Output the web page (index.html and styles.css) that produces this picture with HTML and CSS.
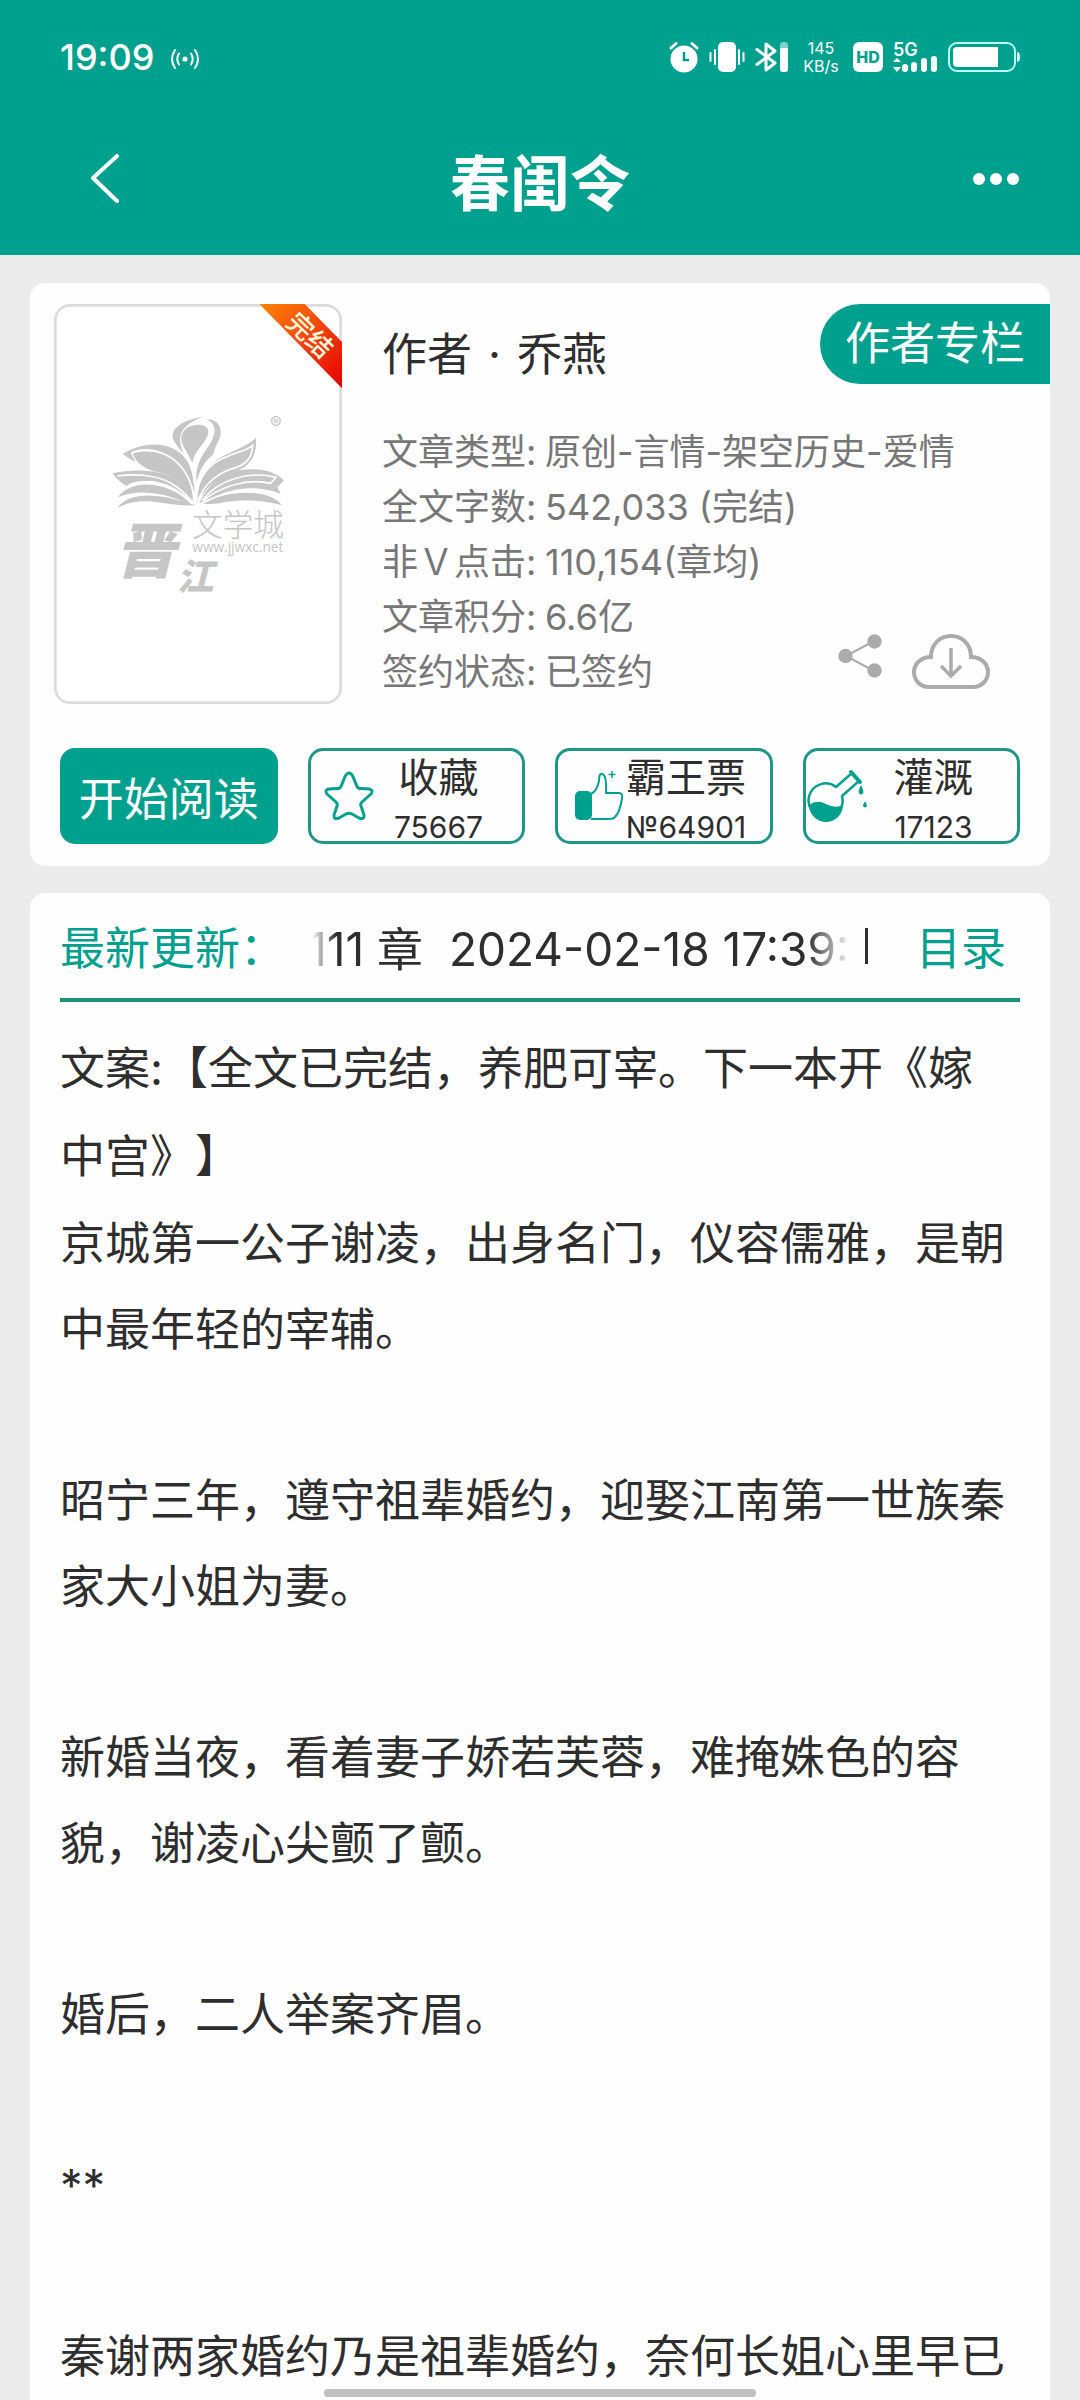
FILE: index.html
```html
<!DOCTYPE html>
<html lang="zh-CN">
<head>
    <meta charset="UTF-8">
    <meta name="viewport" content="width=device-width, initial-scale=1.0">
    <title>春闺令</title>
    <link rel="stylesheet" href="styles.css">
</head>
<body>
    <header class="header">
        <div class="status-bar">
            <span class="clock">19:09</span>
            <svg class="hotspot" width="30" height="22" viewBox="0 0 30 22" fill="none" stroke="#fff" stroke-width="2" stroke-linecap="round">
                <circle cx="15" cy="11" r="2.6" fill="#fff" stroke="none"/>
                <path d="M9 5.500Q5.500 11 9 16.500M21 5.500Q24.500 11 21 16.500M5 2Q-1 11 5 20M25 2Q31 11 25 20"/>
            </svg>
            <div class="status-icons">
                <!-- alarm -->
                <svg width="30" height="32" viewBox="0 0 30 32">
                    <circle cx="15" cy="18" r="13.500" fill="#fff"/>
                    <path d="M2 7L7 2.500M28 7L23 2.500" stroke="#fff" stroke-width="3" stroke-linecap="round"/>
                    <path d="M15 11V19H20" fill="none" stroke="#00a08f" stroke-width="2.500"/>
                </svg>
                <!-- vibrate -->
                <svg width="36" height="32" viewBox="0 0 36 32">
                    <rect x="9" y="1" width="18" height="30" rx="5" fill="#fff"/>
                    <path d="M1.500 12V20M6 9V23M30 9V23M34.500 12V20" stroke="#fff" stroke-width="2" stroke-linecap="round"/>
                </svg>
                <!-- bluetooth -->
                <svg width="34" height="32" viewBox="0 0 34 32">
                    <path d="M2 8.500L20 22L11 29V3L20 10L2 23.500" fill="none" stroke="#fff" stroke-width="3" stroke-linejoin="round" stroke-linecap="round"/>
                    <rect x="25" y="1" width="8" height="30" rx="3" fill="#fff" opacity="0.500"/>
                    <path d="M25 7H33V28Q33 31 30 31H28Q25 31 25 28Z" fill="#fff"/>
                </svg>
                <span class="net-speed">145<br>KB/s</span>
                <svg width="30" height="30" viewBox="0 0 30 30">
                    <rect width="30" height="30" rx="6" fill="#fff"/>
                    <text x="15" y="21" class="hd-text">HD</text>
                </svg>
                <!-- 5G signal -->
                <svg class="signal" width="45" height="32" viewBox="0 0 45 32">
                    <text x="0" y="15" class="signal-text">5G</text>
                    <path d="M0 21L4 17L8 21ZM0 26H8L4 31Z" fill="#fff"/>
                    <path d="M12 26V28M21 24V28M31 20V28M41 18V28" stroke="#fff" stroke-width="6" stroke-linecap="round"/>
                </svg>
                <!-- battery -->
                <svg width="72" height="30" viewBox="0 0 72 30">
                    <rect x="1" y="1" width="66" height="28" rx="8" fill="none" stroke="#b5fff5" stroke-width="2"/>
                    <path d="M9 5H50V25H9Q5 25 5 21V9Q5 5 9 5Z" fill="#fff"/>
                    <path d="M69 10Q72 10 72 15T69 20Z" fill="#c8fff8"/>
                </svg>
            </div>
        </div>
        <nav class="nav-bar">
            <button class="icon-btn" aria-label="返回">
                <svg width="30" height="50" viewBox="0 0 30 50" fill="none" stroke="#fff" stroke-width="4" stroke-linecap="round" stroke-linejoin="round">
                    <path d="M27 2L3 24L27 47"/>
                </svg>
            </button>
            <h1>春闺令</h1>
            <button class="icon-btn" aria-label="更多">
                <svg width="48" height="14" viewBox="0 0 48 14" fill="#fff">
                    <circle cx="7" cy="7" r="6"/>
                    <circle cx="24" cy="7" r="6"/>
                    <circle cx="41" cy="7" r="6"/>
                </svg>
            </button>
        </nav>
    </header>

    <main class="content">
        <section class="card book-card">
            <div class="book">
                <svg class="cover" width="288" height="400" viewBox="72 72 864 1200">
                    <defs>
                        <linearGradient id="ribbon" x1="0" y1="0" x2="1" y2="1">
                            <stop offset="0" stop-color="#ff8400"/>
                            <stop offset="0.500" stop-color="#f04410"/>
                            <stop offset="1" stop-color="#e80000"/>
                        </linearGradient>
                    </defs>
                    <rect x="76" y="76" width="856" height="1192" rx="44" fill="#fff" stroke="#dcdcdc" stroke-width="8"/>
                    <!-- open book -->
                    <g fill="#c6c6c6">
                        <path d="M518 411C455 418 418 450 430 478C438 500 458 512 466 530C440 480 440 440 518 411Z"/>
                        <path d="M487 548C470 510 448 490 455 465C464 438 500 428 524 438C548 452 528 480 510 502Q492 524 487 548Z"/>
                        <path d="M528 418C570 415 584 455 562 490C550 512 556 520 540 532C520 550 508 575 500 606C494 560 514 530 532 504C556 470 568 434 528 418Z"/>
                        <path d="M278 522C320 495 380 482 430 506C470 526 490 560 494 640C480 590 460 552 420 528C380 504 330 500 302 518L316 546C300 538 290 530 278 522Z"/>
                        <path d="M308 520C360 505 412 520 442 552C474 584 486 620 490 664C464 610 430 590 396 580C350 572 316 550 308 520Z"/>
                        <path d="M248 580C310 565 390 570 430 594C464 614 482 640 490 670C452 632 420 612 372 604C330 600 300 606 290 618C270 606 254 592 248 580Z"/>
                        <path d="M264 652C284 622 330 608 376 616C424 624 456 644 484 674C430 652 400 640 350 638C316 636 290 642 264 652Z"/>
                        <path d="M262 684C284 652 330 642 380 648C430 654 462 666 498 676C440 678 410 670 360 664C320 662 290 668 262 684Z"/>
                        <path d="M678 474C640 508 580 520 550 548C516 578 500 620 500 668C530 620 556 600 600 580C650 566 682 540 678 474Z"/>
                        <path d="M508 670C530 620 570 580 630 570C690 562 740 575 762 602L742 620L752 642C700 620 640 620 590 636C560 646 530 660 508 670Z"/>
                        <path d="M520 672C570 640 640 632 690 642C724 648 744 660 756 676C710 664 680 660 620 662C580 666 550 674 520 672Z"/>
                    </g>
                    <g fill="none" stroke="#fff" stroke-width="5">
                        <path d="M500 660C500 590 540 548 590 530C626 514 650 512 668 496C666 530 650 552 620 562C570 574 520 610 504 664"/>
                        <path d="M262 588C330 578 400 590 436 618Q468 640 488 668"/>
                        <path d="M516 662C560 604 650 570 738 592L722 610C650 594 570 620 520 662"/>
                        <path d="M524 430C560 446 550 476 528 502Q502 530 494 580"/>
                    </g>
                    <text x="720" y="447" class="logo-mark">®</text>
                    <text x="486" y="768" class="logo-name">文学城</text>
                    <text x="487" y="815" class="logo-url">www.jjwxc.net</text>
                    <text x="256" y="880" class="logo-jin">晋</text>
                    <text x="440" y="930" class="logo-jiang">江</text>
                    <path d="M688 72H824L936 186V325Z" fill="url(#ribbon)"/>
                    <text transform="translate(838 168) rotate(44)" y="25" class="ribbon-text">完结</text>
                </svg>
                <div class="book-info">
                    <div class="book-head">
                        <p class="author"><span>作者</span><span>·</span><span>乔燕</span></p>
                        <a href="#" class="author-link">作者专栏</a>
                    </div>
                    <dl class="stats">
                        <div><dt>文章类型:</dt><dd>原创-言情-架空历史-爱情</dd></div>
                        <div><dt>全文字数:</dt><dd>542,033 (完结)</dd></div>
                        <div><dt>非Ｖ点击:</dt><dd>110,154(章均)</dd></div>
                        <div><dt>文章积分:</dt><dd>6.6亿</dd></div>
                        <div><dt>签约状态:</dt><dd>已签约</dd></div>
                    </dl>
                    <div class="tools">
                        <button class="icon-btn" aria-label="分享">
                            <svg width="44" height="44" viewBox="0 0 44 44" fill="#ababab">
                                <path d="M36 7L8 22L36 37" fill="none" stroke="#ababab" stroke-width="2"/>
                                <circle cx="36.500" cy="7.500" r="7.200"/>
                                <circle cx="7.500" cy="22" r="7.200"/>
                                <circle cx="36.500" cy="36.500" r="7.200"/>
                            </svg>
                        </button>
                        <button class="icon-btn" aria-label="下载">
                            <svg width="78" height="56" viewBox="0 0 78 56" fill="none" stroke="#ababab" stroke-width="4">
                                <path d="M17 53C8 53 2 46 2 38C2 30 9 23 19 23C19 10 28 2 39 2C50 2 59 10 59 23C69 23 76 30 76 38C76 46 70 53 61 53Z"/>
                                <path d="M39 14V41M29 32L39 42L49 32" stroke-width="3.500"/>
                            </svg>
                        </button>
                    </div>
                </div>
            </div>
            <div class="actions">
                <button class="action read-btn">开始阅读</button>
                <button class="action">
                    <svg width="66" height="54" viewBox="2 0 66 54" fill="none" stroke="#00a08f" stroke-width="3" stroke-linejoin="round">
                        <path d="M36.500 6.500Q40 1.500 43.500 6.500L48 17.500Q49 19.500 52 19.500L60 20Q65 21 62 25L53 33Q51 35 52 37L55 46Q55.500 51 50 49L43 45Q40 43.500 37 45L30 49Q24.500 51 25 46L28 37Q29 35 27 33L18 25Q15 21 20 20L28 19.500Q31 19.500 32 17.500Z"/>
                    </svg>
                    <span class="action-text">收藏<small>75667</small></span>
                </button>
                <button class="action">
                    <svg width="66" height="54" viewBox="2 0 66 54" fill="none" stroke="#00a08f" stroke-width="2" stroke-linejoin="round">
                        <rect x="19" y="22" width="17" height="29" rx="5" fill="#00a08f" stroke="none"/>
                        <path d="M35 25Q41 22 43 12Q43 4 46 5Q51 6 50 24H63Q67 24 66 29Q64 44 58 49Q56 50 52 50H35"/>
                        <path d="M56 2V9M52.500 5.500H59.500" stroke-width="1.500"/>
                    </svg>
                    <span class="action-text">霸王票<small>№64901</small></span>
                </button>
                <button class="action">
                    <svg width="66" height="54" viewBox="1 0 66 54" fill="none" stroke="#00a08f" stroke-width="2.500" stroke-linejoin="round">
                        <path d="M31 18L47 4L54 12L37 27A17 17 0 1 1 31 18Z"/>
                        <path d="M46 3L55 13" stroke-width="4" stroke-linecap="round"/>
                        <path d="M4 36Q12 30 21 35T38 36A17 17 0 0 1 4 36Z" fill="#00a08f" stroke="none"/>
                        <path d="M56 17Q60 25 56 25T56 17ZM60 33Q63 38 60 38T60 33Z" fill="#00a08f" stroke-width="1"/>
                    </svg>
                    <span class="action-text">灌溉<small>17123</small></span>
                </button>
            </div>
        </section>

        <section class="card intro-card">
            <div class="update-row">
                <span class="update-label">最新更新：</span>
                <div class="marquee">111 章&nbsp; 2024-02-18 17:39:</div>
                <span class="divider"></span>
                <a href="#" class="catalog-link">目录</a>
            </div>
            <div class="intro">
                <p class="intro-lead">文案:【全文已完结，养肥可宰。下一本开《嫁中宫》】</p>
                <p>京城第一公子谢凌，出身名门，仪容儒雅，是朝中最年轻的宰辅。</p>
                <p>昭宁三年，遵守祖辈婚约，迎娶江南第一世族秦家大小姐为妻。</p>
                <p>新婚当夜，看着妻子娇若芙蓉，难掩姝色的容貌，谢凌心尖颤了颤。</p>
                <p>婚后，二人举案齐眉。</p>
                <p>**</p>
                <p>秦谢两家婚约乃是祖辈婚约，奈何长姐心里早已</p>
            </div>
        </section>
    </main>

    <div class="home-indicator"></div>
</body>
</html>
```
FILE: styles.css
```css
* {
    margin: 0;
    padding: 0;
    box-sizing: border-box;
}

body {
    display: flex;
    flex-direction: column;
    height: 100vh;
    overflow: hidden;
    background-color: #ebebeb;
    color: #2e2e2e;
    font-family: Inter, "Noto Sans CJK SC", sans-serif;
    font-size: 45px;
    text-spacing-trim: space-all;
}

button {
    border: none;
    background: none;
    color: inherit;
    font: inherit;
    cursor: pointer;
}

a {
    color: #00a08f;
    text-decoration: none;
}

svg {
    display: block;
    flex-shrink: 0;
}

/* header */
.header {
    flex-shrink: 0;
    height: 255px;
    background-color: #00a08f;
    color: #ffffff;
}

.status-bar {
    display: flex;
    align-items: center;
    height: 114px;
    padding: 0 60px;
}

.clock {
    font-size: 36px;
    font-weight: 500;
}

.hotspot {
    margin: 4px 0 0 16px;
}

.status-icons {
    display: flex;
    align-items: center;
    gap: 10px;
    margin-left: auto;
}

.net-speed {
    width: 36px;
    margin: 0 4px;
    font-size: 16px;
    line-height: 18px;
    text-align: center;
}

.hd-text {
    fill: #00a08f;
    font-size: 16px;
    font-weight: 800;
    text-anchor: middle;
}

.signal {
    overflow: visible;
}

.signal-text {
    fill: #ffffff;
    font-size: 18px;
    font-weight: 600;
}

.nav-bar {
    display: flex;
    align-items: center;
    justify-content: space-between;
    height: 130px;
    padding: 0 60px 0 90px;
}

.nav-bar h1 {
    flex: 1;
    padding-right: 12px;
    font-size: 60px;
    font-weight: 700;
    text-align: center;
}

/* cards */
.content {
    display: flex;
    flex-direction: column;
    flex: 1;
    gap: 27px;
    min-height: 0;
    padding: 28px 30px 0;
    overflow: hidden;
}

.card {
    flex-shrink: 0;
    background-color: #fefefe;
    border-radius: 15px;
}

.book-card {
    padding: 21px 0 22px;
}

.book {
    display: flex;
    gap: 40px;
    padding-left: 24px;
}

.logo-mark {
    fill: #c6c6c6;
    font-size: 52px;
}

.logo-name {
    fill: #c6c6c6;
    font-size: 92px;
    font-weight: 300;
}

.logo-url {
    fill: #c6c6c6;
    font-family: "Open Sans", sans-serif;
    font-size: 41px;
}

.logo-jin {
    fill: #c6c6c6;
    font-size: 180px;
    font-style: italic;
    font-weight: 900;
}

.logo-jiang {
    fill: #c6c6c6;
    font-size: 110px;
    font-style: italic;
    font-weight: 900;
}

.ribbon-text {
    fill: #fff6d8;
    font-size: 78px;
    font-weight: 500;
    text-anchor: middle;
}

.book-info {
    position: relative;
    flex: 1;
}

.book-head {
    display: flex;
    justify-content: space-between;
    height: 80px;
    margin-bottom: 41px;
}

.author {
    display: flex;
    gap: 16px;
    padding-top: 24px;
    line-height: 54px;
}

.author-link {
    height: 80px;
    padding: 0 25px;
    border-radius: 40px 0 0 40px;
    background-color: #00a08f;
    color: #ffffff;
    line-height: 80px;
}

.stats {
    color: #777777;
    font-size: 36px;
    line-height: 55px;
}

.stats div {
    display: flex;
}

.stats dt {
    width: 163px;
}

.tools {
    display: flex;
    align-items: flex-start;
    gap: 30px;
    position: absolute;
    right: 60px;
    bottom: 14px;
}

.actions {
    display: grid;
    grid-template-columns: repeat(4, 1fr);
    gap: 30px;
    padding: 44px 30px 0;
}

.action {
    display: flex;
    align-items: center;
    height: 96px;
    border: 3px solid #1f9686;
    border-radius: 15px;
}

.action-text {
    align-self: flex-start;
    width: 124px;
    font-size: 40px;
    line-height: 54px;
    text-align: center;
    white-space: nowrap;
}

.action-text small {
    display: block;
    font-size: 30px;
    line-height: 44px;
}

.read-btn {
    justify-content: center;
    border-color: #00a08f;
    background-color: #00a08f;
    color: #ffffff;
}

/* intro */
.intro-card {
    padding: 0 30px;
}

.update-row {
    display: flex;
    align-items: center;
    height: 109px;
    border-bottom: 4px solid #1f9080;
    color: #2e2e2e;
}

.update-label {
    width: 244px;
    color: #00a08f;
}

.marquee {
    flex: 1;
    overflow: hidden;
    padding-left: 4px;
    font-size: 46px;
    white-space: nowrap;
    mask-image: linear-gradient(to right, transparent 8px, #000 32px, #000 calc(100% - 44px), transparent);
}

.divider {
    width: 3px;
    height: 36px;
    margin: 0 48px 0 14px;
    background-color: #2e2e2e;
}

.catalog-link {
    margin-right: 14px;
}

.intro {
    padding: 23px 10px 0 0;
    line-height: 86px;
}

.intro p {
    margin-bottom: 85px;
}

.intro .intro-lead {
    margin-bottom: 0;
    line-height: 88px;
}

.home-indicator {
    position: fixed;
    bottom: 3px;
    left: 30%;
    width: 40%;
    height: 8px;
    border-radius: 4px;
    background-color: #c1c1c1;
}
```
